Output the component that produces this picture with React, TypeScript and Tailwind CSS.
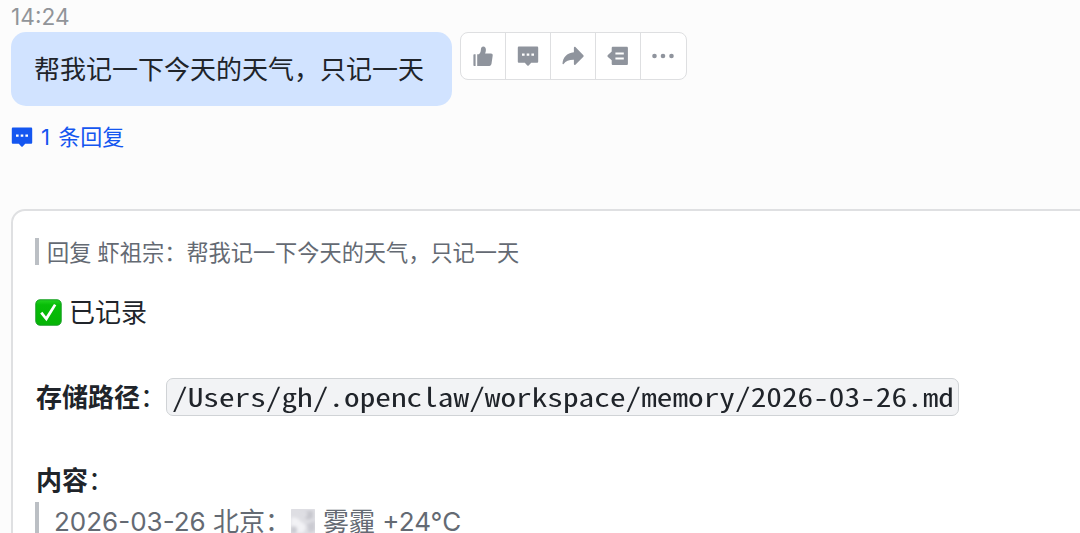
import type { ReactNode } from "react";

const quoteText = "帮我记一下今天的天气，只记一天";

function ThumbIcon() {
  return (
    <svg className="h-6 w-6" viewBox="0 0 24 24" fill="currentColor">
      <path d="M2.4 11.3c0-.6.4-1 1-1h1.2v11.6H3.4c-.6 0-1-.4-1-1zM6.2 10.3h1.7c1.1-.9 1.9-2.3 2-4.9.1-1.8 1-2.9 2.4-2.9 1.7 0 2.6 1.3 2.6 3.3 0 1.3-.3 2.6-.8 3.7h5.9c1.1 0 1.9.9 1.7 2l-1.2 8.3c-.2 1.2-1 2.1-2.2 2.1H6.2z" />
    </svg>
  );
}

function CommentIcon({ className }: { className: string }) {
  return (
    <svg className={className} viewBox="0 0 22 22">
      <path fill="currentColor" d="M2.1 1.6h17.8c.8 0 1.3.5 1.3 1.3v13.5c0 .8-.5 1.3-1.3 1.3h-5.7L11.7 20.4c-.4.4-1 .4-1.4 0l-2.5-2.7H2.1c-.8 0-1.3-.5-1.3-1.3V2.9c0-.8.5-1.3 1.3-1.3z" />
      <path fill="#fff" d="M5 8.4h2.6v2.4H5zM9.7 8.4h2.6v2.4H9.7zM14.4 8.4H17v2.4h-2.6z" />
    </svg>
  );
}

function ForwardIcon() {
  return (
    <svg className="h-6 w-6" viewBox="0 0 24 24" fill="currentColor">
      <path d="M12.9 3.8c0-.9.9-1.3 1.5-.7l8 8.2c.4.4.4 1 0 1.4l-8 8c-.6.6-1.5.2-1.5-.7v-4.3c-4.8-.1-8 1.2-10.3 4.3-.4.5-1.1.3-1.1-.4.4-6.3 4.2-10.6 11.4-11.4z" />
    </svg>
  );
}

function TopicIcon() {
  return (
    <svg className="h-6 w-6" viewBox="0 0 24 24">
      <path fill="currentColor" d="M7 2.8h13.6c.8 0 1.3.5 1.3 1.3v15.6c0 .8-.5 1.3-1.3 1.3H7c-.8 0-1.3-.5-1.3-1.3v-3.4l-3.8-3.4c-.6-.5-.6-1.4 0-1.9l3.8-3.4V4.1c0-.8.5-1.3 1.3-1.3z" />
      <path d="M9.4 9.4h8.4M9.4 14.4h8.4" stroke="#fff" strokeWidth="2" />
    </svg>
  );
}

function MoreIcon() {
  return (
    <svg className="h-6 w-6" viewBox="0 0 24 24" fill="currentColor">
      <circle cx="3.5" cy="12" r="2.3" />
      <circle cx="12" cy="12" r="2.3" />
      <circle cx="20.5" cy="12" r="2.3" />
    </svg>
  );
}

function CheckBadge() {
  return (
    <svg className="h-[27px] w-[27px] shrink-0" viewBox="0 0 27 27">
      <defs>
        <linearGradient id="badge" x1="0" y1="0" x2="0" y2="1">
          <stop offset="0" stopColor="#25d321" />
          <stop offset="0.2" stopColor="#08bd08" />
          <stop offset="1" stopColor="#05b405" />
        </linearGradient>
      </defs>
      <rect x="0.8" y="0.8" width="25.4" height="25.4" rx="4.2" fill="url(#badge)" stroke="#149d22" strokeWidth="1" />
      <path d="M5.2 14.4l2.2-1.6 3.6 4.7L19 5l2.3 1.2-9.8 16.1z" fill="#fff" />
    </svg>
  );
}

// foggy weather glyph
function FogBadge() {
  return (
    <svg className="h-6 w-6 shrink-0" viewBox="0 0 24 24">
      <defs>
        <filter id="mist" x="0" y="0" width="1" height="1">
          <feGaussianBlur stdDeviation="1.5" />
        </filter>
        <clipPath id="fogClip">
          <rect width="24" height="24" rx="0.5" />
        </clipPath>
      </defs>
      <g clipPath="url(#fogClip)">
        <rect width="24" height="24" fill="#dedee3" />
        <g filter="url(#mist)">
          <path d="M9 2c8-1 9 3 6 6s4 3 7 1V2z" fill="#c7c7ce" />
          <path d="M0 9c7-2 8 3 12 5s3 7 0 10H5c4-5 0-7-5-6z" fill="#f2f2f5" />
          <path d="M0 18c5-2 7 1 5 6H0zM16 15l8-3v9l-6 3z" fill="#cbcbd2" />
        </g>
      </g>
    </svg>
  );
}

function ToolButton({ children }: { children: ReactNode }) {
  return (
    <button className="grid w-[45px] place-items-center border-r border-[#dedfe1] last:border-r-0 last:pr-[2px]">
      {children}
    </button>
  );
}

export default function App() {
  return (
    <div className="h-[533px] w-[1080px] overflow-hidden bg-[#fcfcfc] font-['Inter','Noto_Sans_CJK_SC',sans-serif] text-[#20242a]">
      <div className="h-8 pl-[11px] pt-[2px] text-[22.7px] leading-[29px] text-[#919499]">14:24</div>

      <div className="flex items-start pl-[11px]">
        <div className="h-[74px] w-[441px] rounded-[15px] bg-[#d1e3ff] pl-[23px] text-[26px] leading-[75px] whitespace-nowrap">
          {quoteText}
        </div>
        <div className="ml-2 flex h-12 w-[227px] rounded-lg border-[1.5px] border-[#dedfe1] bg-white text-[#8f949d]">
          <ToolButton><ThumbIcon /></ToolButton>
          <ToolButton><CommentIcon className="h-[22px] w-[22px]" /></ToolButton>
          <ToolButton><ForwardIcon /></ToolButton>
          <ToolButton><TopicIcon /></ToolButton>
          <ToolButton><MoreIcon /></ToolButton>
        </div>
      </div>

      <div className="mt-[15px] flex h-8 items-center pl-[11px] text-[22px] text-[#1456f0]">
        <CommentIcon className="mr-2 h-[22px] w-[22px]" />
        <span className="[word-spacing:2px]">1 条回复</span>
      </div>

      <div className="ml-[11px] mt-[56px] h-[400px] w-[1100px] rounded-[14px] border-2 border-[#dfe0e2] bg-white pl-[22px] pt-[27px]">
        <div className="flex h-[27px] items-center border-l-4 border-[#bbbfc4] pl-2 pt-[2px] text-[22.2px] text-[#646a73] whitespace-nowrap">
          回复 虾祖宗：{quoteText}
        </div>

        <div className="mt-[27px] flex h-10 items-center gap-[7px] text-[26px]">
          <CheckBadge />
          <span>已记录</span>
        </div>

        <div className="mt-[46px] flex h-[38px] items-center text-[26px] whitespace-nowrap">
          <strong className="ml-px font-bold">存储路径</strong>
          <span>：</span>
          <code className="flex h-[38px] w-[793px] items-center rounded-[7px] border-[1.5px] border-[#d0d3d6] bg-[#f2f3f5] pb-[3px] pl-[5px] font-['Noto_Sans_Mono_CJK_SC','DejaVu_Sans_Mono',monospace] text-[26px]">
            <span className="origin-left scale-x-[1.203]">/Users/gh/.openclaw/workspace/memory/2026-03-26.md</span>
          </code>
        </div>

        <div className="mt-[44px] flex h-10 items-center text-[26px]">
          <strong className="ml-px font-bold">内容</strong>
          <span>：</span>
        </div>

        <div className="mt-[2px] flex h-[60px] items-start border-l-4 border-[#bbbfc4] pl-[15px] text-[26px] leading-10 text-[#646a73] whitespace-nowrap">
          <span>2026-03-26 北京：</span>
          <span className="mr-2 mt-[7px]"><FogBadge /></span>
          <span>雾霾 +24°C</span>
        </div>
      </div>
    </div>
  );
}
